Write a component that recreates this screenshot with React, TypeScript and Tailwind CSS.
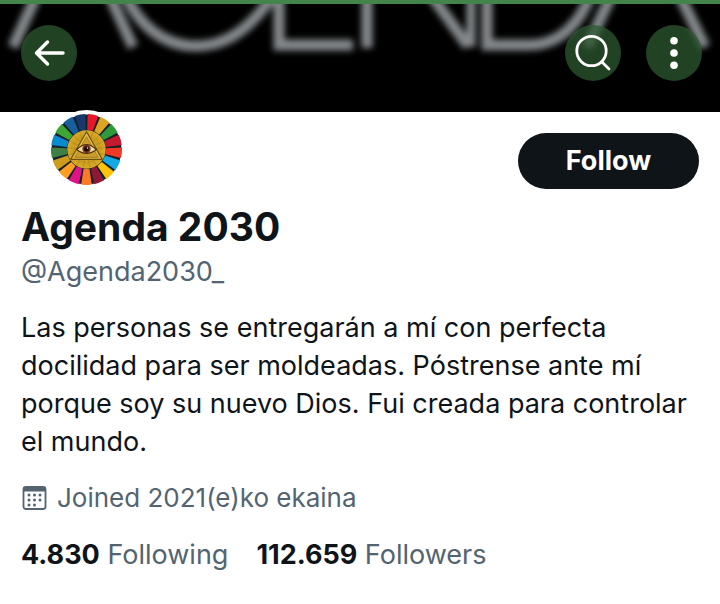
const goals = [
  "#e5182b", "#dda620", "#2f9a3c", "#c5192d", "#ee3a24", "#16a8e2", "#fcc30b", "#8f1838", "#fd7925",
  "#dd1387", "#fd9d24", "#cf9b1e", "#3f7e44", "#0a8ad0", "#3fa535", "#175f9d", "#19386a",
];

function point(angle: number, radius: number) {
  return `${(36 + Math.sin(angle) * radius).toFixed(2)} ${(36 - Math.cos(angle) * radius).toFixed(2)}`;
}

function Wheel() {
  const step = (Math.PI * 2) / goals.length;
  return (
    <svg viewBox="0 0 72 72" className="size-full" role="img" aria-label="Agenda 2030 avatar">
      <defs>
        <radialGradient id="gold">
          <stop offset="0" stopColor="#e9cb55" />
          <stop offset="0.65" stopColor="#c99a1e" />
          <stop offset="1" stopColor="#d9ab2b" />
        </radialGradient>
      </defs>
      <circle cx="36" cy="36" r="35.5" fill="#14202b" />
      {goals.map((color, i) => {
        const a = i * step + 0.035;
        const b = (i + 1) * step - 0.035;
        return (
          <path key={color} fill={color} d={`M${point(a, 20)}L${point(a, 36)}A36 36 0 0 1 ${point(b, 36)}L${point(b, 20)}Z`} />
        );
      })}
      <circle cx="36" cy="36" r="19.5" fill="url(#gold)" />
      <g stroke="#8d650d" strokeWidth="0.5" opacity="0.6">
        {goals.map((color, i) => (
          <path key={color} d={`M${point(i * step, 9)}L${point(i * step, 19)}`} />
        ))}
      </g>
      <path d="M36 18 52 46H20Z" fill="#e3bd45" stroke="#70500d" strokeWidth="1.2" strokeLinejoin="round" />
      <path d="M36 23 48 44H24Z" fill="#c99c2e" stroke="#8d650d" strokeWidth="0.6" />
      <path d="M26 36Q36 26 46 36Q36 44 26 36Z" fill="#f3d9a0" stroke="#51300c" strokeWidth="1.2" />
      <circle cx="36" cy="35.5" r="4.2" fill="#7a2f18" />
      <circle cx="36" cy="35.5" r="2.5" fill="#160b08" />
      <circle cx="37" cy="34.5" r="0.7" fill="#fff" />
    </svg>
  );
}

function Banner() {
  return (
    <svg viewBox="0 0 720 108" preserveAspectRatio="xMidYMid slice" className="col-start-1 row-start-1 h-27 w-full" aria-hidden="true">
      <defs>
        <filter id="soft" x="-5%" y="-50%" width="110%" height="200%">
          <feGaussianBlur stdDeviation="3" />
        </filter>
      </defs>
      <g fill="none" stroke="#85898c" strokeWidth="11" filter="url(#soft)">
        <path d="M39-14 13 43" />
        <path d="M107-14 133 43" />
        <path d="M123-14C139 24 166 42 196 42S250 26 277-14" />
        <path d="M279-20V41H353" />
        <path d="M367-20V44" />
        <path d="M423-20 468 42" />
        <path d="M471-20V43" strokeWidth="9" />
        <path d="M487-20V41H529C560 41 582 18 592-14" />
        <path d="M614-14 587 43" />
        <path d="M677-14 705 43" />
      </g>
    </svg>
  );
}

const round = "flex size-14 items-center justify-center rounded-full bg-[#2c582f]/75 text-white";

export default function App() {
  return (
    <main className="min-h-screen bg-white font-['Inter','Liberation_Sans',sans-serif] text-[27px] leading-[38px] text-[#0f1419]">
      <header className="grid border-t-4 border-[#42844a] bg-black">
        <Banner />
        <nav className="z-10 col-start-1 row-start-1 flex items-start gap-[25px] px-[21px] pt-[21px] pr-[18px]">
          <button aria-label="Back" className={round}>
            <svg viewBox="0 0 56 56" className="size-14" fill="none" stroke="currentColor" strokeWidth="3.4" strokeLinecap="round" strokeLinejoin="round">
              <path d="M42 28H16M26.500 17 15.500 28 26.500 39" />
            </svg>
          </button>
          <button aria-label="Search" className={`${round} ml-auto`}>
            <svg viewBox="0 0 56 56" className="size-14" fill="none" stroke="currentColor" strokeWidth="2.8" strokeLinecap="round">
              <circle cx="26.500" cy="26" r="14.700" />
              <path d="m37 37 7 7" />
            </svg>
          </button>
          <button aria-label="More options" className={round}>
            <svg viewBox="0 0 56 56" className="size-14" fill="currentColor">
              <circle cx="28" cy="15.700" r="3.800" />
              <circle cx="28" cy="28" r="3.800" />
              <circle cx="28" cy="40.300" r="3.800" />
            </svg>
          </button>
        </nav>
      </header>
      <section className="px-[21px] pb-6">
        <div className="flex items-start justify-between">
          <div className="z-10 -mt-0.5 ml-[26px] size-[79px] rounded-full bg-white p-1">
            <Wheel />
          </div>
          <button className="mt-[21px] h-14 w-[181px] rounded-full bg-[#0f1419] font-bold text-white">Follow</button>
        </div>
        <h1 className="mt-3.5 text-[39px] leading-[48px] font-bold">Agenda 2030</h1>
        <p className="mt-0.5 text-[#536471]">@Agenda2030_</p>
        <p className="mt-[18px]">
          Las personas se entregarán a mí con perfecta docilidad para ser moldeadas. Póstrense ante mí porque soy su nuevo Dios. Fui creada para controlar el mundo.
        </p>
        <p className="mt-[18px] flex items-center gap-2.5 text-[26px] text-[#536471]">
          <svg viewBox="0 0 26 26" className="size-[26px] shrink-0" fill="currentColor" aria-hidden="true">
            <rect x="2.500" y="2" width="22" height="22" rx="2.500" fill="none" stroke="currentColor" strokeWidth="1.800" />
            <path d="M2.500 2H24.500V6.500H2.500Z" />
            <g>
              <circle cx="8" cy="10" r="1.500" /><circle cx="13.500" cy="10" r="1.500" /><circle cx="19" cy="10" r="1.500" />
              <circle cx="8" cy="15" r="1.500" /><circle cx="13.500" cy="15" r="1.500" /><circle cx="19" cy="15" r="1.500" />
              <circle cx="8" cy="20" r="1.500" /><circle cx="13.500" cy="20" r="1.500" />
            </g>
          </svg>
          <span>Joined 2021(e)ko ekaina</span>
        </p>
        <div className="mt-[19px] flex flex-wrap gap-x-7 text-[#536471]">
          <a href="#following"><strong className="font-bold text-[#0f1419]">4.830</strong> Following</a>
          <a href="#followers"><strong className="font-bold text-[#0f1419]">112.659</strong> Followers</a>
        </div>
      </section>
    </main>
  );
}
